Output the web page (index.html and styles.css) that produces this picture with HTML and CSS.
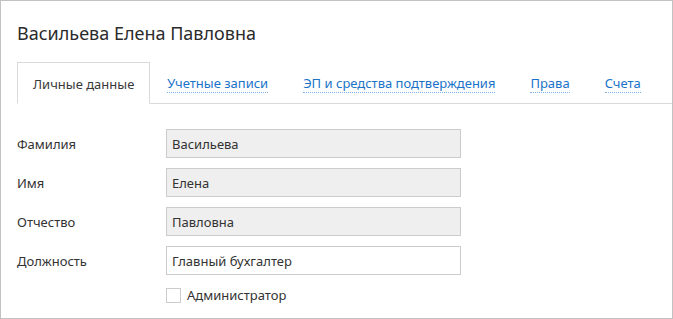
FILE: index.html
```html
<!DOCTYPE html>
<html lang="ru">
<head>
    <meta charset="UTF-8">
    <title>Карточка сотрудника</title>
    <link rel="stylesheet" href="styles.css">
</head>
<body>
    <div class="card">
        <h1 class="title">Васильева Елена Павловна</h1>

        <div class="tabs">
            <span class="tab active">Личные данные</span>
            <a class="tab" href="#">Учетные записи</a>
            <a class="tab" href="#">ЭП и средства подтверждения</a>
            <a class="tab" href="#">Права</a>
            <a class="tab" href="#">Счета</a>
        </div>

        <form class="form">
            <div class="form-row">
                <label for="lastName">Фамилия</label>
                <input type="text" id="lastName" class="form-control" value="Васильева" readonly>
            </div>
            <div class="form-row">
                <label for="firstName">Имя</label>
                <input type="text" id="firstName" class="form-control" value="Елена" readonly>
            </div>
            <div class="form-row">
                <label for="middleName">Отчество</label>
                <input type="text" id="middleName" class="form-control" value="Павловна" readonly>
            </div>
            <div class="form-row">
                <label for="position">Должность</label>
                <input type="text" id="position" class="form-control editable" value="Главный бухгалтер">
            </div>
            <div class="form-row">
                <span></span>
                <label class="checkbox">
                    <input type="checkbox">
                    <span class="box"></span>
                    Администратор
                </label>
            </div>
        </form>
    </div>
</body>
</html>
```

FILE: styles.css
```css
:root {
    --text-color: #333;
    --link-color: #1a73c9;
    --border-color: #dadada;
}

* {
    box-sizing: border-box;
    margin: 0;
    padding: 0;
}

body {
    font-family: "Noto Sans", "Open Sans", sans-serif;
    font-size: 13px;
    color: var(--text-color);
    background-color: white;
}

.card {
    height: 319px;
    border: 1px solid #c2c2c2;
    padding: 20px 0 0 16px;
    overflow: hidden;
}

.title {
    font-size: 18px;
    font-weight: 400;
    line-height: 24px;
    color: #2b2b2b;
}

.tabs {
    display: flex;
    align-items: flex-end;
    margin-top: 17px;
    border-bottom: 1px solid var(--border-color);
    height: 42px;
    white-space: nowrap;
}

.tab {
    display: block;
    flex-shrink: 0;
    margin-right: 35px;
    line-height: 18px;
    color: var(--link-color);
    text-decoration: none;
}

.tab:not(.active) {
    border-bottom: 1px dotted #7eb2e6;
    margin-bottom: 10px;
}

.tab.active {
    color: #3a3a3a;
    border: 1px solid var(--border-color);
    border-bottom: 1px solid white;
    margin-bottom: -1px;
    padding: 12px 15px 0;
    margin-right: 17px;
    height: 42px;
}

.form {
    padding-top: 25px;
}

.form-row {
    display: grid;
    grid-template-columns: 149px 295px;
    align-items: center;
    margin-bottom: 10px;
}

.form-control {
    height: 29px;
    padding: 0 5px;
    border: 1px solid #cccccc;
    background-color: #efefef;
    font: inherit;
    color: var(--text-color);
    outline: none;
}

.form-control.editable {
    background-color: white;
}

.checkbox {
    display: flex;
    align-items: center;
    gap: 6px;
    margin-top: 1px;
}

.checkbox input {
    display: none;
}

.checkbox .box {
    width: 15px;
    height: 15px;
    border: 1px solid #cccccc;
}
```
